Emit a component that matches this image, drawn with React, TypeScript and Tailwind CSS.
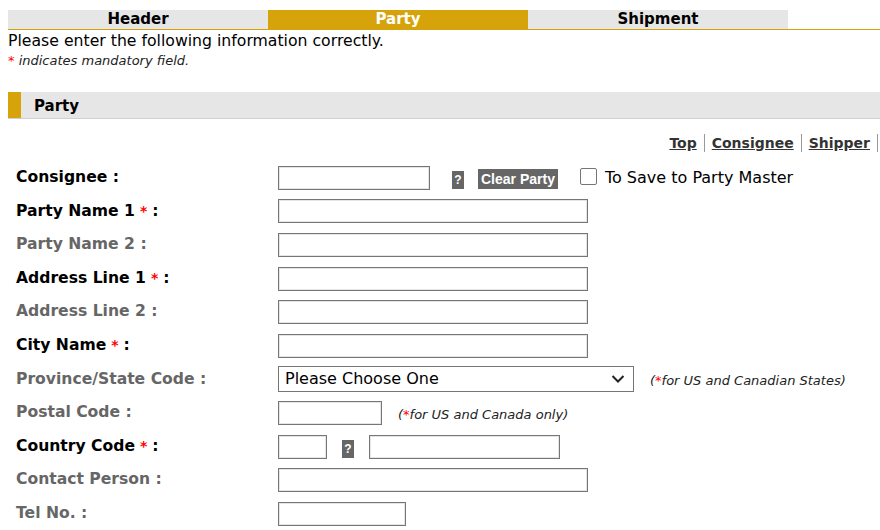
const LABEL_FONT = "font-['DejaVu_Sans',Verdana,sans-serif]";
const BODY_FONT = "font-['DejaVu_Sans',Tahoma,sans-serif]";

const TABS = [
  { name: 'Header', active: false },
  { name: 'Party', active: true },
  { name: 'Shipment', active: false },
];

function Req() {
  return <span className="mx-[5px] text-[14px] text-[#ff0000]">*</span>;
}

function Field({ w }: { w: string }) {
  return <div className={`h-[24px] border border-[#767676] bg-white shadow-[inset_0_0_0_1px_#e5e5e5] ${w}`} />;
}

function Qbox() {
  return (
    <span className="inline-flex h-[18px] w-[12px] items-center justify-center bg-[#666] text-[12px] font-bold text-white font-['Liberation_Sans',Arial,sans-serif]">
      ?
    </span>
  );
}

function Row({ label, req, dark, children }: { label: string; req?: boolean; dark?: boolean; children?: React.ReactNode }) {
  return (
    <div className="grid h-[33.6px] grid-cols-[262px_1fr] items-center">
      <div className={`${LABEL_FONT} text-[15.6px] font-bold ${req || dark ? 'text-black' : 'text-[#666]'}`}>
        {label}
        {req ? <Req /> : ' '}:
      </div>
      <div className="flex items-center">{children}</div>
    </div>
  );
}

export default function App() {
  return (
    <div className={`min-h-[530px] w-[880px] bg-white pl-2 pt-[10px] text-black ${BODY_FONT}`}>
      {/* Tabs */}
      <div className="flex h-[20px] border-b border-[#d4a20b]">
        {TABS.map(t => (
          <div
            key={t.name}
            className={`flex h-[19px] w-[260px] items-center justify-center text-[15px] font-bold ${LABEL_FONT} ${
              t.active ? 'bg-[#d6a40a] text-white' : 'bg-[#e6e6e6] text-black'
            }`}
          >
            {t.name}
          </div>
        ))}
      </div>

      <div className="mt-[1px] text-[15.7px] leading-[20px]">Please enter the following information correctly.</div>
      <div className="mt-[2px] text-[13px] italic leading-[16px] text-[#222]">
        <span className="not-italic text-[#ff0000]">*</span> indicates mandatory field.
      </div>

      {/* Section bar */}
      <div className="mt-[23px] flex h-[27px] items-center border-b border-[#d0d0d0] bg-[#e6e6e6]">
        <div className="h-full w-[13px] bg-[#d6a40a]" />
        <span className={`ml-[13px] mt-[2px] text-[15px] font-bold ${LABEL_FONT}`}>Party</span>
      </div>

      {/* Anchor links */}
      <div className={`mt-[14px] flex h-[20px] items-center justify-end pr-[2px] text-[14px] font-bold text-[#333] ${LABEL_FONT}`}>
        <a className="underline">Top</a>
        <span className="mx-[7px] h-[18px] border-l border-[#999]" />
        <a className="underline">Consignee</a>
        <span className="mx-[7px] h-[18px] border-l border-[#999]" />
        <a className="underline">Shipper</a>
        <span className="ml-[7px] h-[18px] border-l border-[#999]" />
      </div>

      {/* Form */}
      <div className="mt-[8px] pl-2">
        <Row label="Consignee" dark>
          <Field w="w-[152px]" />
          <span className="ml-[22px] mt-[3px]"><Qbox /></span>
          <span className="ml-[14px] mt-[3px] flex h-[20px] items-center bg-[#666] px-[3px] text-[14px] font-bold text-white font-['Liberation_Sans',Arial,sans-serif]">
            Clear Party
          </span>
          <span className="ml-[22px] -mt-[2px] h-[17px] w-[17px] rounded-[2px] border border-[#767676] bg-white" />
          <span className="ml-[8px] text-[16px]">To Save to Party Master</span>
        </Row>
        <Row label="Party Name 1" req><Field w="w-[310px]" /></Row>
        <Row label="Party Name 2"><Field w="w-[310px]" /></Row>
        <Row label="Address Line 1" req><Field w="w-[310px]" /></Row>
        <Row label="Address Line 2"><Field w="w-[310px]" /></Row>
        <Row label="City Name" req><Field w="w-[310px]" /></Row>
        <Row label="Province/State Code">
          <div className="flex h-[26px] w-[356px] items-center justify-between border border-[#767676] bg-white pl-[6px] pr-[8px]">
            <span className="text-[16px]">Please Choose One</span>
            <svg width="14" height="10" viewBox="0 0 14 10">
              <path d="M1.5 2 L7 7.5 L12.5 2" fill="none" stroke="#222" strokeWidth="2" />
            </svg>
          </div>
          <span className="ml-[16px] mt-[2px] text-[13px] italic text-[#222]">
            (<span className="text-[#ff0000]">*</span>for US and Canadian States)
          </span>
        </Row>
        <Row label="Postal Code">
          <Field w="w-[104px]" />
          <span className="ml-[16px] mt-[4px] text-[13px] italic text-[#222]">
            (<span className="text-[#ff0000]">*</span>for US and Canada only)
          </span>
        </Row>
        <Row label="Country Code" req>
          <Field w="w-[49px]" />
          <span className="ml-[15px] mt-[2px]"><Qbox /></span>
          <span className="ml-[15px]"><Field w="w-[191px]" /></span>
        </Row>
        <Row label="Contact Person"><Field w="w-[310px]" /></Row>
        <Row label="Tel No."><Field w="w-[128px]" /></Row>
      </div>
    </div>
  );
}
